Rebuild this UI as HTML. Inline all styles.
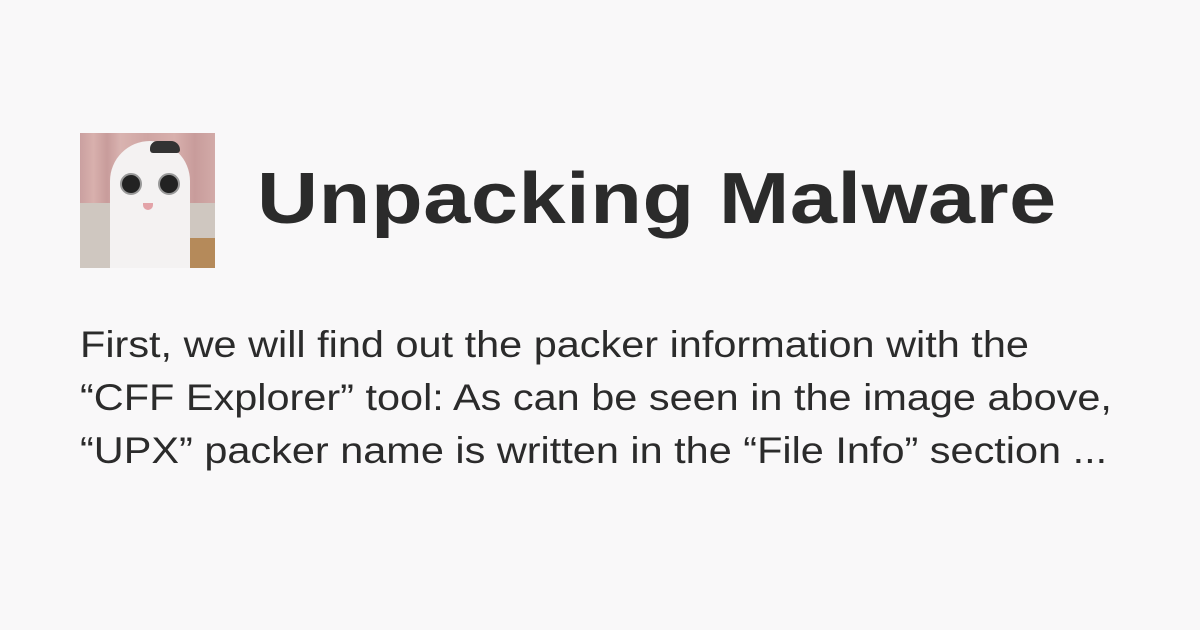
<!DOCTYPE html>
<html><head><meta charset="utf-8"><style>
html,body{margin:0;padding:0;}
body{width:1200px;height:630px;background:#f9f8f9;position:relative;overflow:hidden;font-family:"Liberation Sans",sans-serif;color:#2b2b2b;}
.av{position:absolute;left:80px;top:133px;width:135px;height:135px;overflow:hidden;
background:linear-gradient(90deg,#caa0a0 0,#d8b0ad 10%,#c89c9b 20%,#d9b3b0 30%,#cfa5a3 50%,#d8b0ad 70%,#c89c9b 85%,#d2aaa8 100%);}
.floor{position:absolute;left:0;top:70px;width:135px;height:65px;background:#cfc7c0;}
.shelf{position:absolute;right:0;top:105px;width:25px;height:30px;background:#b58a5a;}
.cat{position:absolute;left:30px;top:8px;width:80px;height:140px;background:#f4f2f2;border-radius:40px 40px 10px 10px;}
.hair{position:absolute;left:70px;top:8px;width:30px;height:12px;background:#333;border-radius:10px 12px 4px 4px;}
.eye{position:absolute;top:40px;width:18px;height:18px;border-radius:50%;background:#222;border:2px solid #999;}
.nose{position:absolute;left:63px;top:70px;width:10px;height:7px;background:#e3a3a8;border-radius:0 0 6px 6px;}
h1{position:absolute;left:257px;top:158px;margin:0;font-size:72px;font-weight:bold;color:#2b2b2b;white-space:nowrap;letter-spacing:0.5px;transform:scaleX(1.175);transform-origin:0 0;}
.t{position:absolute;left:80px;font-size:37px;white-space:nowrap;color:#2b2b2b;transform:scaleX(1.12);transform-origin:0 0;}
</style></head><body>
<div class="av"><div class="floor"></div><div class="shelf"></div><div class="cat"></div><div class="hair"></div>
<div class="eye" style="left:40px"></div><div class="eye" style="left:78px"></div><div class="nose"></div></div>
<h1>Unpacking Malware</h1>
<div class="t" style="top:324px">First, we will find out the packer information with the</div>
<div class="t" style="top:377px">“CFF Explorer” tool: As can be seen in the image above,</div>
<div class="t" style="top:430px">“UPX” packer name is written in the “File Info” section ...</div>
</body></html>
